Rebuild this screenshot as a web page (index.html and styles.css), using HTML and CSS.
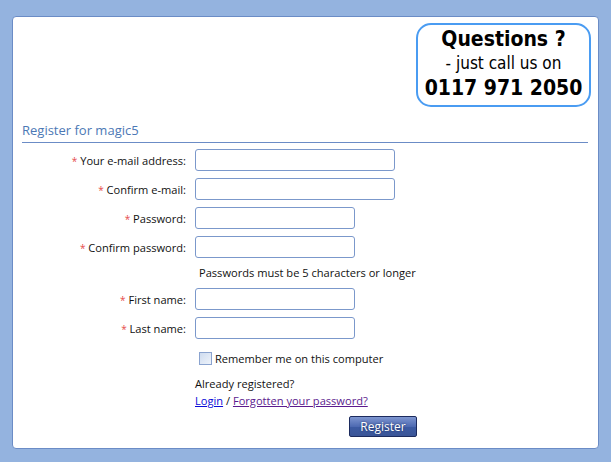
FILE: index.html
```html
<!DOCTYPE html>
<html>
<head>
<meta charset="utf-8">
<link rel="stylesheet" href="styles.css">
</head>
<body>
<div class="panel">
  <div class="top">
    <div class="questions">
      <div class="q1">Questions ?</div>
      <div class="q2">- just call us on</div>
      <div class="q3">0117 971 2050</div>
    </div>
  </div>
  <h2 class="title">Register for magic5</h2>
  <form class="form">
    <label class="lbl"><span class="req">*</span> Your e-mail address:</label>
    <input class="field wide" type="text">
    <label class="lbl"><span class="req">*</span> Confirm e-mail:</label>
    <input class="field wide" type="text">
    <label class="lbl"><span class="req">*</span> Password:</label>
    <input class="field" type="password">
    <label class="lbl"><span class="req">*</span> Confirm password:</label>
    <input class="field" type="password">
    <div class="note">Passwords must be 5 characters or longer</div>
    <label class="lbl"><span class="req">*</span> First name:</label>
    <input class="field" type="text">
    <label class="lbl"><span class="req">*</span> Last name:</label>
    <input class="field" type="text">
    <div class="remember"><span class="check"></span>Remember me on this computer</div>
    <div class="already">Already registered?<br><a href="#" class="login">Login</a> / <a href="#" class="forgot">Forgotten your password?</a></div>
    <div class="actions"><button type="button" class="btn">Register</button></div>
  </form>
</div>
</body>
</html>
```

FILE: styles.css
```css
html, body {
  margin: 0;
  padding: 0;
  background: #94b3df;
  height: 100%;
}
body {
  padding: 16px 12px 14px 12px;
  box-sizing: border-box;
  font-family: "Open Sans", "DejaVu Sans", sans-serif;
  font-size: 11.1px;
  color: #111;
}
.panel {
  background: #fff;
  border: 1px solid #6b8cc6;
  border-radius: 4px;
  height: 433px;
  box-sizing: border-box;
  padding: 6px 7px 0 9px;
}
.top {
  display: flex;
  justify-content: flex-end;
}
.questions {
  width: 175px;
  height: 84px;
  box-sizing: border-box;
  border: 2px solid #4a9cf2;
  border-radius: 15px;
  text-align: center;
  font-family: "DejaVu Sans Condensed", "DejaVu Sans", sans-serif;
  color: #000;
  padding-top: 1px;
}
.q1 {
  font-weight: bold;
  font-size: 21px;
  line-height: 26px;
}
.q2 {
  font-size: 17px;
  line-height: 22px;
}
.q3 {
  font-weight: bold;
  font-size: 21px;
  line-height: 28px;
}
.title {
  margin: 14px 3px 0 0;
  font-weight: normal;
  font-size: 13px;
  line-height: 18px;
  color: #4c78b5;
  border-bottom: 1px solid #6b8cc6;
  padding-bottom: 3px;
}
.form {
  display: grid;
  grid-template-columns: 164px auto;
  column-gap: 9px;
  row-gap: 7px;
  margin-top: 6px;
  align-items: center;
}
.lbl {
  text-align: right;
  white-space: nowrap;
}
.req {
  color: #e64b4b;
  font-size: 10px;
}
.field {
  height: 22px;
  box-sizing: border-box;
  border: 1px solid #7b98cb;
  border-radius: 3px;
  width: 160px;
  margin: 0;
  padding: 0 3px;
}
.field.wide {
  width: 200px;
}
.note {
  grid-column: 2;
  padding-left: 4px;
  line-height: 15px;
  margin: 0 0 1px 0;
}
.remember {
  grid-column: 2;
  display: flex;
  align-items: center;
  padding-left: 4px;
  margin-top: 5px;
}
.check {
  width: 13px;
  height: 13px;
  box-sizing: border-box;
  border: 1px solid #8aa3cf;
  background: linear-gradient(135deg, #cfdcef, #eef3fa);
  margin-right: 3px;
}
.already {
  grid-column: 2;
  line-height: 17px;
  margin-top: 2px;
}
.login {
  color: #0a0ad8;
}
.forgot {
  color: #5b1a8e;
}
.actions {
  grid-column: 2;
  display: flex;
  justify-content: flex-end;
  width: 222px;
  margin-top: 0;
}
.btn {
  width: 68px;
  height: 21px;
  border: 1px solid #1c2b5e;
  border-radius: 2px;
  background: linear-gradient(#7e96d0 0%, #4e6ab2 50%, #3c5aa2 55%, #3a5597 100%);
  color: #fff;
  font-family: inherit;
  font-size: 12px;
  padding: 0;
  text-shadow: 0 0 2px #1c2b5e;
}
```
